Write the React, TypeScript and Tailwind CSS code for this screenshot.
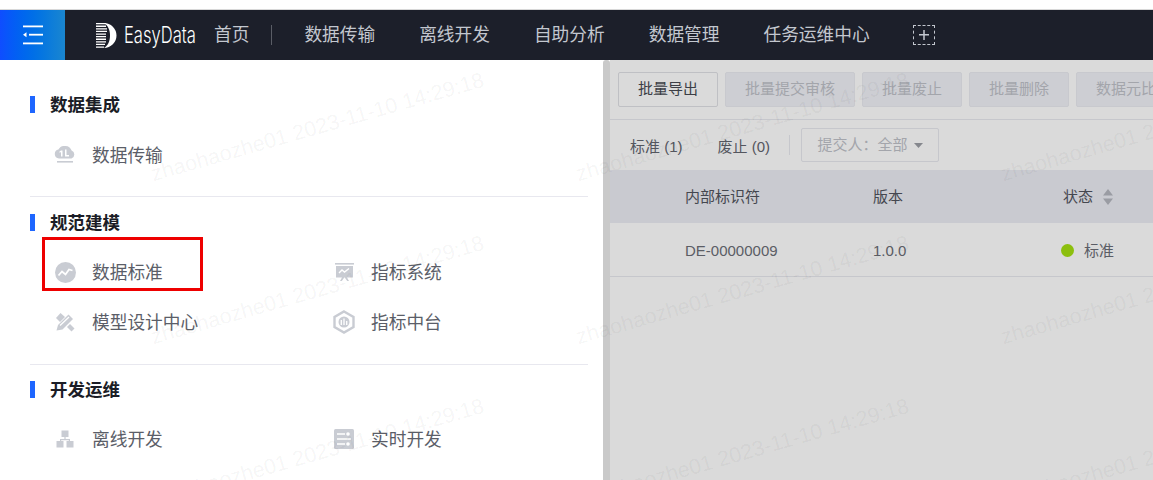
import React from "react";

const NAV_ITEMS = ["数据传输", "离线开发", "自助分析", "数据管理", "任务运维中心"];

const CloudIcon = () => (
  <svg width="22" height="18" viewBox="0 0 22 18" fill="#c9ccd3">
    <path d="M5 12.500a4.500 4.500 0 0 1-.6-8.900A6.800 6.800 0 0 1 11 0a6.800 6.800 0 0 1 6.600 4.600A4.200 4.200 0 0 1 17.500 12.500z" />
    <rect x="3" y="15" width="16" height="1.600" />
    <path d="M7 4.500h1.500v6H7zM5.500 5.500 7 4.500v1.500l-1.500.8zM11 3.500h1.500v5.600H15v1.400h-4z" fill="#fff" />
  </svg>
);

const TrendIcon = () => (
  <svg width="21" height="21" viewBox="0 0 21 21">
    <circle cx="10.500" cy="10.500" r="10.500" fill="#c9ccd3" />
    <path d="M3.500 13.500 7 9.500l3.500 3 3.500-5 3.500 1" fill="none" stroke="#fff" strokeWidth="1.800" />
  </svg>
);

const DesignIcon = () => (
  <svg width="20" height="20" viewBox="0 0 20 20" fill="#c9ccd3">
    <path d="M1 6 5.500 1 10 5l-5 5z" />
    <path d="M1.500 18.500 3 13 13.500 2.500 18 7 7.500 17.500z" />
    <path d="m12 15 3-3 4.500 4.500L16.500 19.500z" />
    <path d="M5 13.500 14 5" stroke="#fff" strokeWidth="1.300" />
  </svg>
);

const BoardIcon = () => (
  <svg width="19" height="19" viewBox="0 0 19 19" fill="#c9ccd3">
    <rect x="0" y="0" width="19" height="1.600" />
    <path d="M1 3h17v11.500H12l2 3.500h-1.800l-2.500-3.500H9.300L6.800 18H5l2-3.500H1z" />
    <path d="m4 10 3-3 2.500 2L14 5.500" fill="none" stroke="#fff" strokeWidth="1.400" />
  </svg>
);

const HexIcon = () => (
  <svg width="22" height="24" viewBox="0 0 22 24" fill="none">
    <path d="M11 1.500 20.500 7v10L11 22.500 1.500 17V7z" stroke="#c9ccd3" strokeWidth="2.400" />
    <circle cx="11" cy="12" r="5.500" fill="#c9ccd3" />
    <path d="M8.300 10v5M11 8.500V15M13.700 11v4" stroke="#fff" strokeWidth="1.300" />
  </svg>
);

const TreeIcon = () => (
  <svg width="18" height="18" viewBox="0 0 18 18" fill="#c9ccd3">
    <rect x="5.500" y="0.500" width="7" height="6.500" />
    <rect x="0.500" y="11" width="7" height="6.500" />
    <rect x="10.500" y="11" width="7" height="6.500" />
    <path d="M8.400 7h1.200v2H14v2h-1.200v-.8H5.200v.8H4V9h4.400z" />
  </svg>
);

const FlowIcon = () => (
  <svg width="20" height="20" viewBox="0 0 20 20">
    <rect width="20" height="20" rx="1.500" fill="#c9ccd3" />
    <path d="M3 5h8M3 10h14M3 15h8" stroke="#fff" strokeWidth="1.600" fill="none" />
    <circle cx="14" cy="5" r="1.800" fill="#fff" />
    <circle cx="14" cy="15" r="1.800" fill="#fff" />
  </svg>
);

const SmallIcon = () => (
  <svg width="18" height="18" viewBox="0 0 18 18" fill="#c9ccd3">
    <path d="m9 0 3 4H6z" />
    <rect x="3" y="6" width="12" height="10" />
  </svg>
);

const LogoMark = () => (
  <svg width="22" height="25" viewBox="0 0 22 25" fill="#fff">
    <path d="M0 0h10v1.300H0zM0 2.600h10v1.300H0zM0 5.200h11v1.300H0zM0 7.800h11v1.300H0zM0 10.400h10v1.300H0zM0 13h10v1.300H0zM0 15.600h10v1.300H0zM0 18.200h10v1.300H0zM0 20.800h9v1.300H0zM0 23.400h8v1.300H0z" />
    <path d="M8 0a12.500 12.500 0 0 1 0 25c4-2.500 6-7 6-12.500S12 2.500 8 0z" />
  </svg>
);

const MenuItem = ({ icon, label }: { icon: React.ReactNode; label: string }) => (
  <div className="flex h-[50px] items-center">
    <div className="flex w-[30px] justify-center">{icon}</div>
    <span className="ml-3 pt-[2px] text-[17.7px] text-[#5b5e68]">{label}</span>
  </div>
);

const SectionTitle = ({ title }: { title: string }) => (
  <div className="flex h-[17px] items-center border-l-[5px] border-[#1e66ff] pl-[15px] pt-[2px] text-[17.5px] font-bold text-[#1b1d26]">
    {title}
  </div>
);

const ToolButton = ({
  label,
  width,
  disabled,
}: {
  label: string;
  width: string;
  disabled?: boolean;
}) => (
  <div
    className={`flex h-[35px] shrink-0 items-center justify-center overflow-hidden whitespace-nowrap rounded-[2px] border text-[15px] ${width} ${
      disabled
        ? "border-[#c8c9ce] bg-[#cdced3] text-[#a3a5ab]"
        : "border-[#bfc0c4] bg-[#dadada] text-[#3c3e46]"
    }`}
  >
    {label}
  </div>
);

export default function App() {
  return (
    <div className="relative flex h-[480px] w-[1153px] flex-col overflow-hidden bg-white font-['Liberation_Sans','Noto_Sans_CJK_SC',sans-serif]">
      <div className="h-[10px] shrink-0 border-b border-[#d8d8d8] bg-white" />

      {/* top nav */}
      <div className="flex h-[50px] shrink-0 items-center bg-[#1c1f2a]">
        <div className="flex h-full w-[65px] items-center justify-center bg-gradient-to-r from-[#0f4dff] to-[#1a86cf]">
          <svg width="20" height="20" viewBox="0 0 20 20" fill="#fff">
            <rect x="0" y="0.500" width="20" height="1.800" />
            <rect x="6" y="8.800" width="14" height="1.800" />
            <rect x="0" y="17.500" width="20" height="1.800" />
            <path d="M0 9.700 3.500 7.200v5z" />
          </svg>
        </div>
        <div className="ml-[31px]">
          <LogoMark />
        </div>
        <span className="ml-[6px] w-[72px] origin-left scale-x-[0.72] whitespace-nowrap font-['Inter'] text-[23px] font-light text-white">
          EasyData
        </span>
        <span className="ml-[18px] text-[17.7px] text-[#c3c7cf]">首页</span>
        <div className="ml-[22px] h-[20px] w-[1px] bg-[#5a5d66]" />
        <div className="ml-[32px] flex gap-[44px] text-[17.7px] text-[#c3c7cf]">
          {NAV_ITEMS.map((item) => (
            <span key={item}>{item}</span>
          ))}
        </div>
        <div className="ml-[43px] flex h-[20px] w-[22px] items-center justify-center border border-dashed border-[#c3c7cf]">
          <svg width="10" height="10" viewBox="0 0 10 10" fill="#c3c7cf">
            <rect x="0" y="4" width="10" height="1.500" />
            <rect x="4.250" y="0" width="1.500" height="10" />
          </svg>
        </div>
      </div>

      <div className="flex min-h-0 flex-1">
        {/* side menu */}
        <div className="w-[603px] shrink-0 bg-white pl-[30px] pt-[36px]">
          <div className="w-[558px]">
            <SectionTitle title="数据集成" />
            <div className="mt-[17px] pl-5">
              <MenuItem icon={<CloudIcon />} label="数据传输" />
            </div>
            <div className="mt-4 h-[1px] bg-[#e8e8ef]" />

            <div className="mt-[17px]">
              <SectionTitle title="规范建模" />
            </div>
            <div className="mt-4 grid grid-cols-[279px_1fr] pl-5">
              <MenuItem icon={<TrendIcon />} label="数据标准" />
              <MenuItem icon={<BoardIcon />} label="指标系统" />
              <MenuItem icon={<DesignIcon />} label="模型设计中心" />
              <MenuItem icon={<HexIcon />} label="指标中台" />
            </div>
            <div className="mt-[17px] h-[1px] bg-[#e8e8ef]" />

            <div className="mt-4">
              <SectionTitle title="开发运维" />
            </div>
            <div className="mt-4 grid grid-cols-[279px_1fr] pl-5">
              <MenuItem icon={<TreeIcon />} label="离线开发" />
              <MenuItem icon={<FlowIcon />} label="实时开发" />
              <MenuItem icon={<SmallIcon />} label="" />
            </div>
          </div>
        </div>

        {/* scrollbar of the menu */}
        <div className="w-[7px] shrink-0 rounded-t-[3px] bg-[#c9c9c9]" />

        {/* dimmed page behind */}
        <div className="min-w-0 flex-1 overflow-hidden bg-[#dadada]">
          <div className="flex h-[60px] items-start gap-[7px] border-b border-[#c6c7cc] pl-[8px] pt-[12px]">
            <ToolButton label="批量导出" width="w-[100px]" />
            <ToolButton label="批量提交审核" width="w-[130px]" disabled />
            <ToolButton label="批量废止" width="w-[100px]" disabled />
            <ToolButton label="批量删除" width="w-[100px]" disabled />
            <ToolButton label="数据元比对" width="w-[115px]" disabled />
          </div>

          <div className="flex h-[50px] items-center text-[15px] text-[#54565e]">
            <span className="ml-[20px] pt-[4px]">标准 (1)</span>
            <span className="ml-[35px] pt-[4px]">废止 (0)</span>
            <div className="ml-[19px] h-[20px] w-[1px] bg-[#c6c7cc]" />
            <div className="ml-[11px] flex h-[34px] w-[138px] items-center justify-center gap-[6px] rounded-[2px] border border-[#c6c7cc] text-[#a3a5ab]">
              提交人：全部
              <svg width="9" height="5" viewBox="0 0 9 5" fill="#85878d">
                <path d="M0 0h9L4.500 5z" />
              </svg>
            </div>
          </div>

          <div className="flex h-[53px] items-center bg-[#c9cad0] text-[15px] text-[#45474f]">
            <span className="ml-[75px] w-[188px] pt-[2px]">内部标识符</span>
            <span className="w-[190px] pt-[2px]">版本</span>
            <span className="pt-[2px]">状态</span>
            <svg className="ml-[10px]" width="10" height="16" viewBox="0 0 10 16" fill="#9a9ca3">
              <path d="M5 0 10 6.500H0zM0 9.500h10L5 16z" />
            </svg>
          </div>

          <div className="flex h-[54px] items-center border-b border-[#c6c7cc] text-[15px] text-[#5b5d65]">
            <span className="ml-[75px] w-[188px] pt-[3px]">DE-00000009</span>
            <span className="w-[188px] pt-[3px]">1.0.0</span>
            <span className="mt-[2px] h-[13px] w-[13px] rounded-full bg-[#8cbf0e]" />
            <span className="ml-[10px] pt-[3px]">标准</span>
          </div>
        </div>
      </div>

      {/* watermark layer */}
      <div className="pointer-events-none absolute inset-0 grid grid-cols-[repeat(3,425px)] auto-rows-[163px] overflow-hidden pl-[105px] pt-[46px]">
        {Array.from({ length: 9 }).map((_, i) => (
          <div key={i} className="flex items-center justify-center">
            <span className="-rotate-[16deg] whitespace-nowrap text-[21.5px] text-[#000]/[0.05]">
              zhaohaozhe01 2023-11-10 14:29:18
            </span>
          </div>
        ))}
      </div>

      {/* red annotation box */}
      <div className="absolute left-[42px] top-[237px] h-[54px] w-[161px] border-[3px] border-[#ee0000]" />
    </div>
  );
}
